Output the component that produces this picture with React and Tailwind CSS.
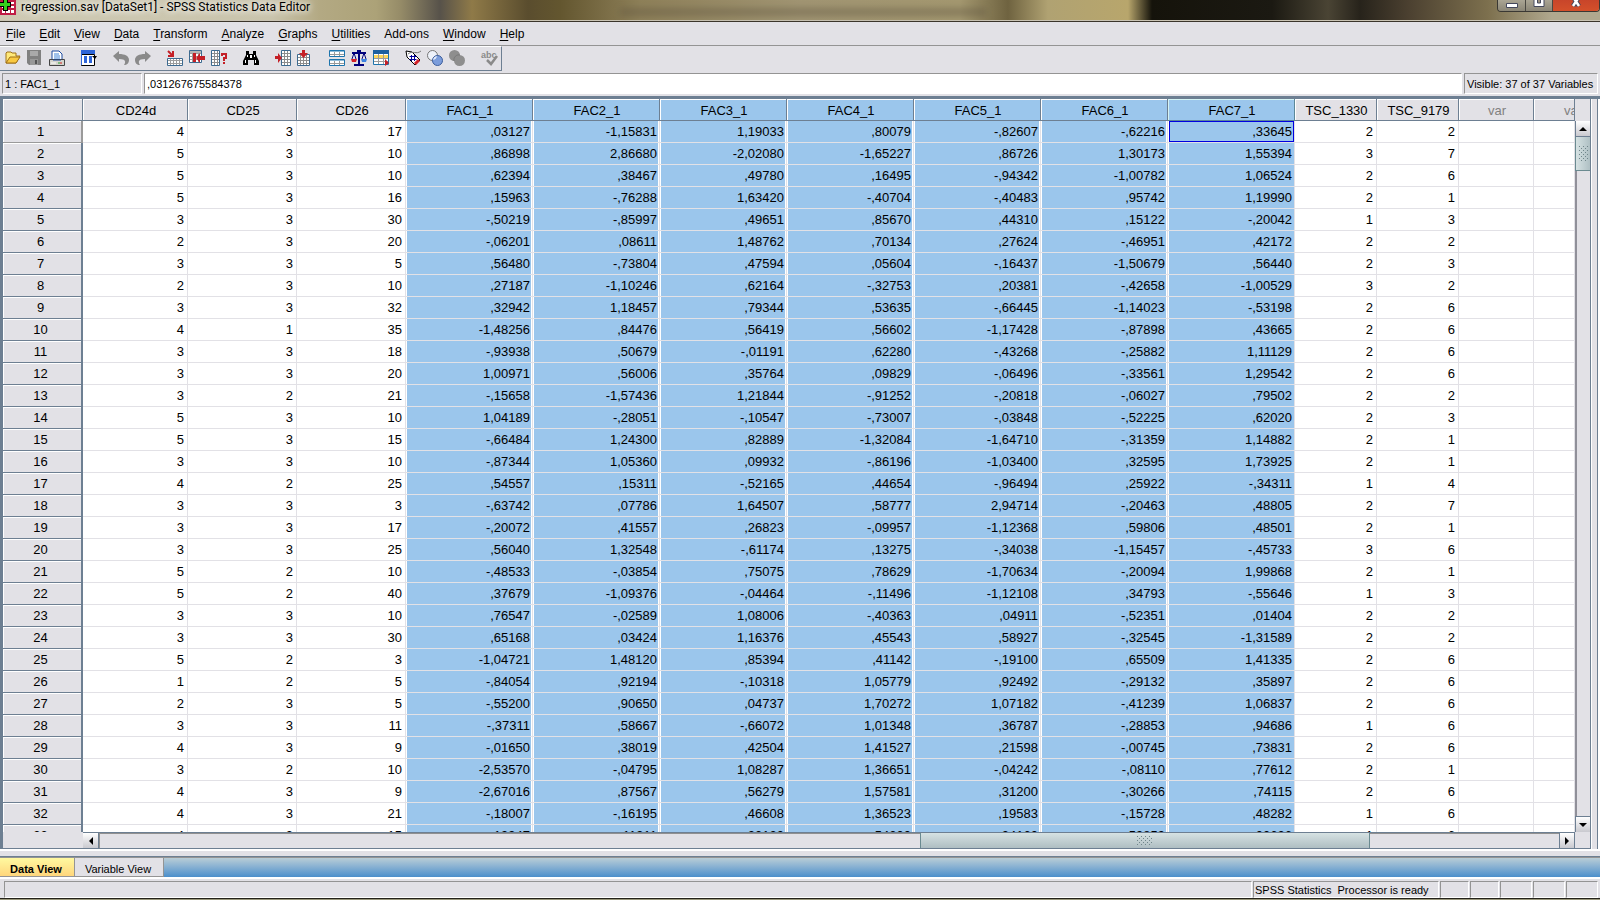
import React from "react";

const columns = [
  { name: "CD24d", kind: "plain" },
  { name: "CD25", kind: "plain" },
  { name: "CD26", kind: "plain" },
  { name: "FAC1_1", kind: "selected" },
  { name: "FAC2_1", kind: "selected" },
  { name: "FAC3_1", kind: "selected" },
  { name: "FAC4_1", kind: "selected" },
  { name: "FAC5_1", kind: "selected" },
  { name: "FAC6_1", kind: "selected" },
  { name: "FAC7_1", kind: "active" },
  { name: "TSC_1330", kind: "plain" },
  { name: "TSC_9179", kind: "plain" },
  { name: "var", kind: "empty" },
  { name: "var", kind: "empty" },
];

const rows = `4 3 17 ,03127 -1,15831 1,19033 ,80079 -,82607 -,62216 ,33645 2 2
5 3 10 ,86898 2,86680 -2,02080 -1,65227 ,86726 1,30173 1,55394 3 7
5 3 10 ,62394 ,38467 ,49780 ,16495 -,94342 -1,00782 1,06524 2 6
5 3 16 ,15963 -,76288 1,63420 -,40704 -,40483 ,95742 1,19990 2 1
3 3 30 -,50219 -,85997 ,49651 ,85670 ,44310 ,15122 -,20042 1 3
2 3 20 -,06201 ,08611 1,48762 ,70134 ,27624 -,46951 ,42172 2 2
3 3 5 ,56480 -,73804 ,47594 ,05604 -,16437 -1,50679 ,56440 2 3
2 3 10 ,27187 -1,10246 ,62164 -,32753 ,20381 -,42658 -1,00529 3 2
3 3 32 ,32942 1,18457 ,79344 ,53635 -,66445 -1,14023 -,53198 2 6
4 1 35 -1,48256 ,84476 ,56419 ,56602 -1,17428 -,87898 ,43665 2 6
3 3 18 -,93938 ,50679 -,01191 ,62280 -,43268 -,25882 1,11129 2 6
3 3 20 1,00971 ,56006 ,35764 ,09829 -,06496 -,33561 1,29542 2 6
3 2 21 -,15658 -1,57436 1,21844 -,91252 -,20818 -,06027 ,79502 2 2
5 3 10 1,04189 -,28051 -,10547 -,73007 -,03848 -,52225 ,62020 2 3
5 3 15 -,66484 1,24300 ,82889 -1,32084 -1,64710 -,31359 1,14882 2 1
3 3 10 -,87344 1,05360 ,09932 -,86196 -1,03400 ,32595 1,73925 2 1
4 2 25 ,54557 ,15311 -,52165 ,44654 -,96494 ,25922 -,34311 1 4
3 3 3 -,63742 ,07786 1,64507 ,58777 2,94714 -,20463 ,48805 2 7
3 3 17 -,20072 ,41557 ,26823 -,09957 -1,12368 ,59806 ,48501 2 1
3 3 25 ,56040 1,32548 -,61174 ,13275 -,34038 -1,15457 -,45733 3 6
5 2 10 -,48533 -,03854 ,75075 ,78629 -1,70634 -,20094 1,99868 2 1
5 2 40 ,37679 -1,09376 -,04464 -,11496 -1,12108 ,34793 -,55646 1 3
3 3 10 ,76547 -,02589 1,08006 -,40363 ,04911 -,52351 ,01404 2 2
3 3 30 ,65168 ,03424 1,16376 ,45543 ,58927 -,32545 -1,31589 2 2
5 2 3 -1,04721 1,48120 ,85394 ,41142 -,19100 ,65509 1,41335 2 6
1 2 5 -,84054 ,92194 -,10318 1,05779 ,92492 -,29132 ,35897 2 6
2 3 5 -,55200 ,90650 ,04737 1,70272 1,07182 -,41239 1,06837 2 6
3 3 11 -,37311 ,58667 -,66072 1,01348 ,36787 -,28853 ,94686 1 6
4 3 9 -,01650 ,38019 ,42504 1,41527 ,21598 -,00745 ,73831 2 6
3 2 10 -2,53570 -,04795 1,08287 1,36651 -,04242 -,08110 ,77612 2 1
4 3 9 -2,67016 ,87567 ,56279 1,57581 ,31200 -,30266 ,74115 2 6
4 3 21 -,18007 -,16195 ,46608 1,36523 ,19583 -,15728 ,48282 1 6
4 3 15 ,19947 ,11911 ,20120 ,54200 ,34160 ,59859 ,00626 1 6`
  .split("\n")
  .map((line) => line.split(" "));

const menus = [
  ["", "F", "ile"],
  ["", "E", "dit"],
  ["", "V", "iew"],
  ["", "D", "ata"],
  ["", "T", "ransform"],
  ["", "A", "nalyze"],
  ["", "G", "raphs"],
  ["", "U", "tilities"],
  ["Add-ons", "", ""],
  ["", "W", "indow"],
  ["", "H", "elp"],
];

const drawings = {
  Open: (
    <>
      <path d="M1 12V3l1-1h4l1 1h4v3h4l-4 7H1z" fill="#ffe97a" stroke="#a07018" />
      <path d="M1 13l4-6h10l-4 6z" fill="#f9c940" stroke="#a07018" />
    </>
  ),
  Save: (
    <>
      <path d="M0 0h14v15H2l-2-2z" fill="#808080" />
      <path d="M3 1h8v5H3z" fill="#a9a9a9" />
      <path d="M3 9h8v6H3z" fill="#989898" />
      <path d="M8 10h2v4H8z" fill="#555" />
    </>
  ),
  Print: (
    <>
      <path d="M3 1h7l3 3v7H3z" fill="#fff" stroke="#1c4aa0" />
      <path d="M5 4h5M5 6h6M5 8h6" stroke="#3f83d8" />
      <path d="M.5 9.500h15v6H.5z" fill="#d4d4cc" stroke="#444" />
      <path d="M4 10h8" stroke="#1c4aa0" />
      <path d="M2 13h5" stroke="#fff" />
      <path d="M9 13h2" stroke="#28a030" />
      <path d="M11 13h2" stroke="#d02020" />
    </>
  ),
  "Recall recently used dialogs": (
    <>
      <path d="M0 0h14v4H0z" fill="#2f66d8" />
      <path d="M.5 4.500h13v11H.5z" fill="#fff" stroke="#000" />
      <path d="M.5 4v11" stroke="#2f66d8" />
      <path d="M3 6h3v7H3zM8 6h3v7H8z" fill="#2f66d8" />
      <path d="M11 6h5l-2 3z" fill="#000" />
    </>
  ),
  Undo: <path d="M0 6l6-5v3c6 0 10 2 10 6 0 3-2 5-5 5 2-3 2-6-5-6v3z" fill="#8a8a8a" />,
  Redo: <path d="M16 6l-6-5v3C4 4 0 6 0 10c0 3 2 5 5 5-2-3-2-6 5-6v3z" fill="#8a8a8a" />,
  "Go to case": (
    <>
      <path d="M1 1l4 4M6 1v5H1" stroke="#c41f26" strokeWidth="2" fill="none" />
      <path d="M.5 8.500h15v7H.5z" fill="#fff" stroke="#3c6a90" />
      <path d="M1 10.500h14M1 13.500h14M3.500 9v6M6.500 9v6M9.500 9v6M12.500 9v6" stroke="#9c9c9c" />
    </>
  ),
  "Go to variable": (
    <>
      <path d="M.5 .5h12v12H.5z" fill="#fff" stroke="#3c6a90" />
      <path d="M1 3.500h11M1 6.500h11M1 9.500h11M3.500 1v11M9.500 1v11" stroke="#9c9c9c" />
      <path d="M1 1h11v2H1z" fill="#b5b5b5" />
      <path d="M4 3h3v9H4z" fill="#c41f26" />
      <path d="M7 8l4-5v3h5v4h-5v3z" fill="#c41f26" />
    </>
  ),
  Variables: (
    <>
      <path d="M.5 .5h8v15h-8z" fill="#fff" stroke="#3c6a90" />
      <path d="M1 3.500h7M1 6.500h7M1 9.500h7M1 12.500h7M3.500 1v14M6.500 1v14" stroke="#8c8c8c" />
      <path d="M11 6V4h4v4h-2v3" stroke="#c41f26" strokeWidth="2" fill="none" />
      <path d="M12 12h2v2h-2z" fill="#c41f26" />
    </>
  ),
  Find: (
    <>
      <path d="M3 1h3v3h4V1h3v4l3 6v4h-5v-5H5v5H0v-4l3-6z" fill="#000" />
      <path d="M4.500 5v2M2.500 10v3M11.500 5v2M12.500 10v3" stroke="#fff" />
      <path d="M7 5h2v3H7z" fill="#fff" />
    </>
  ),
  "Insert cases": (
    <>
      <path d="M6.500 .5h9v15h-9z" fill="#fff" stroke="#3c6a90" />
      <path d="M7 3.500h8M7 6.500h8M7 9.500h8M7 12.500h8M9.500 1v14M12.500 1v14" stroke="#8c8c8c" />
      <path d="M0 6h3V3l4 5-4 5V9H0z" fill="#c41f26" />
    </>
  ),
  "Insert variable": (
    <>
      <path d="M.5 4.500h12v11H.5z" fill="#fff" stroke="#3c6a90" />
      <path d="M1 7.500h11M1 10.500h11M1 13.500h11M3.500 5v10M6.500 5v10M9.500 5v10" stroke="#8c8c8c" />
      <path d="M5 0h3v3h3L6.500 8 2 3h3z" fill="#c41f26" />
    </>
  ),
  "Split file": (
    <>
      <path d="M.5 .5h15v6H.5zM.5 9.500h15v6H.5z" fill="#fff" stroke="#1d74ad" />
      <path d="M1 1h14M1 10h14" stroke="#1d74ad" />
      <path d="M1 4.500h14M1 13.500h14M5.500 2v4M10.500 2v4M5.500 11v4M10.500 11v4" stroke="#999" />
    </>
  ),
  "Weight cases": (
    <>
      <path d="M8 0v14M1 3h14M3 15h10M6 1h4" stroke="#00007c" strokeWidth="2" />
      <path d="M3 3L1 9M3 3l2 6M13 3l-2 6M13 3l2 6" stroke="#00007c" />
      <path d="M0 9h6l-1 3H1z" fill="#d32028" />
      <path d="M10 9h6l-1 3h-4z" fill="#3d82e0" />
    </>
  ),
  "Select cases": (
    <>
      <path d="M.5 .5h15v14H.5z" fill="#fff" stroke="#1d74ad" />
      <path d="M0 0h16v4H0z" fill="#1d5fa0" />
      <path d="M1 5h14v3H1z" fill="#ffd65a" />
      <path d="M1 8.500h14M1 11.500h14M5.500 4v10M10.500 4v10" stroke="#9c9c9c" />
      <path d="M12 9l4 4-4 3z" fill="#c41f26" />
    </>
  ),
  "Value labels": (
    <>
      <path d="M1 1l6 1 8 8-5 5-8-8z" fill="#fff" stroke="#000" />
      <path d="M10 14l4-4" stroke="#d32028" strokeWidth="3" />
      <path d="M6.500 5v6M9.500 5v6M4.500 6.500h7M4.500 9.500h7" stroke="#00009c" />
      <path d="M3 4c5-4 8 1 13-3" stroke="#777" fill="none" />
    </>
  ),
  "Use variable sets": (
    <>
      <circle cx="5.500" cy="5.500" r="5" fill="#eef2fa" stroke="#777" />
      <circle cx="10.500" cy="10.500" r="5" fill="#7c9ddb" stroke="#3b5d9c" />
      <path d="M6 10a5 5 0 0 1 4-4 5 5 0 0 1-4 4z" fill="#e4ecfa" />
    </>
  ),
  "Show all variables": (
    <>
      <circle cx="5.500" cy="5.500" r="5.500" fill="#8e8e8e" />
      <circle cx="10.500" cy="10.500" r="5.500" fill="#8e8e8e" />
      <path d="M5 11a5 5 0 0 1 6-6" stroke="#777" fill="none" />
    </>
  ),
};

const toolGroups = [
  ["Open", "Save", "Print"],
  ["Recall recently used dialogs"],
  ["Undo", "Redo"],
  ["Go to case", "Go to variable", "Variables"],
  ["Find"],
  ["Insert cases", "Insert variable"],
  ["Split file", "Weight cases", "Select cases"],
  ["Value labels", "Use variable sets", "Show all variables"],
  ["Spell check"],
];

function ToolIcon({ name }) {
  if (name === "Spell check") {
    return (
      <svg className="h-4 w-4 overflow-visible" viewBox="0 0 16 16">
        <text x="0" y="8" fontFamily="Liberation Sans, sans-serif" fontSize="9" fontWeight="bold" fill="#8a8a8a">
          abc
        </text>
        <path d="M6 10l4 4 6-8" stroke="#8a8a8a" strokeWidth="2.500" fill="none" />
      </svg>
    );
  }
  return (
    <svg className="h-4 w-4 overflow-visible" viewBox="0 0 16 16" aria-hidden="true">
      {drawings[name]}
    </svg>
  );
}

function Arrow({ d }) {
  return (
    <svg className="h-2 w-2" viewBox="0 0 8 8" aria-hidden="true">
      <path d={d} fill="#000" />
    </svg>
  );
}

function Grip({ className }) {
  return (
    <svg className={className} aria-hidden="true">
      <defs>
        <pattern id="grip" width="4" height="4" patternUnits="userSpaceOnUse">
          <path d="M0 0h1v1H0zM2 2h1v1H2z" fill="#6f858a" />
        </pattern>
      </defs>
      <rect width="100%" height="100%" fill="url(#grip)" />
    </svg>
  );
}

function TitleBar() {
  return (
    <header className="relative flex h-[22px] shrink-0 items-start justify-between overflow-hidden border-b border-[#3b352b] bg-[linear-gradient(90deg,#cfcab4_0%,#c9c4ac_17%,#b3a983_20%,#aca278_23.500%,#968c68_25%,#57524a_27.500%,#8f7a48_29.500%,#5a4d2e_33%,#63562f_35%,#8d7f58_40%,#a09472_50%,#a3976f_60%,#6f6340_63%,#b0a272_65.500%,#b8a66c_70.500%,#15130b_72%,#1b1912_79.500%,#4a4434_83%,#27231b_85%,#4b4030_88%,#7d704e_93%,#b0a88e_97%)] shadow-[inset_0_-1px_0_#c9c3b4]">
      <span className="absolute top-2 left-[620px] h-2 w-[366px] bg-[#5e5540]/40 blur-[3px]" />
      <div className="relative flex items-start gap-[5px]">
        <svg className="h-4 w-4" viewBox="0 0 16 16" aria-hidden="true">
          <path d="M0 0h16v15H0z" fill="#c01c44" />
          <path d="M2 2h3v2H2zM6 2h3v2H6zM11 2h3v2h-3zM2 6h3v2H2zM11 6h3v2h-3zM2 10h3v3H2zM6 10h4v3H6zM11 10h3v3h-3z" fill="#fff" />
          <path d="M3 0h5v2h3v5H8v4H3V7H0V2h3z" fill="#000" />
          <path d="M4 0h3v3h3v3H7v4H4V6H0V3h4z" fill="#35d01c" />
        </svg>
        <h1 className="font-[Roboto,sans-serif] text-[12px] leading-[15px] text-black [text-shadow:0_0_6px_#fff,0_0_8px_#fff]">
          regression.sav [DataSet1] - SPSS Statistics Data Editor
        </h1>
      </div>
      <div className="relative flex h-3 overflow-hidden rounded-b border border-t-0 border-[#3a3833]">
        <button aria-label="Minimize" className="flex w-7 items-start justify-center border-r border-[#4a4842] bg-linear-to-b from-[#aaa594] to-[#8b8676] pt-[3px]">
          <svg className="h-[5px] w-3" viewBox="0 0 12 5"><path d="M.5 .5h11v4H.5z" fill="#fff" stroke="#44485c" /></svg>
        </button>
        <button aria-label="Restore" className="flex w-[27px] items-start justify-center border-r border-[#4a4842] bg-linear-to-b from-[#aaa594] to-[#8b8676]">
          <svg className="h-[7px] w-3" viewBox="0 0 12 7"><path d="M1 -2h10v8.500H1z" fill="#fff" stroke="#44485c" /><path d="M4.500 -1h3v4h-3z" fill="#998f7c" stroke="#44485c" /></svg>
        </button>
        <button aria-label="Close" className="flex w-[46px] items-start justify-center bg-linear-to-b from-[#c8452a] to-[#d4502a]">
          <svg className="h-[7px] w-3" viewBox="0 0 12 7"><path d="M3 -3l6 9M9 -3L3 6" stroke="#44485c" strokeWidth="4.500" /><path d="M3 -3l6 9M9 -3L3 6" stroke="#fff" strokeWidth="2.500" /></svg>
        </button>
      </div>
    </header>
  );
}

const headStyle = {
  plain: "bg-[#e2e1e6] text-black border-[#6d7f92] shadow-[inset_1px_1px_0_#fff]",
  empty: "bg-[#e2e1e6] text-[#808080] border-[#6d7f92] shadow-[inset_1px_1px_0_#fff]",
  selected: "bg-[#9bc6ec] text-black border-[#6d7f92] shadow-[inset_1px_1px_0_#fff]",
  active: "bg-[#9bc6ec] text-black border-[#5c8799] shadow-[inset_1px_1px_0_#d5f4f4]",
};

const cellStyle = {
  plain: "bg-white pr-[3px]",
  empty: "bg-white",
  selected: "bg-[#9bc6ec] pr-0.5 shadow-[inset_1px_0_0_#fff,inset_-1px_0_0_#fff]",
  active: "bg-[#9bc6ec] pr-0.5 shadow-[inset_1px_0_0_#fff]",
};

function Sheet() {
  return (
    <table className="w-full table-fixed border-separate border-spacing-0 text-[13px] leading-[20px]">
      <colgroup>
        <col className="w-[80px]" />
        <col className="w-[105px]" />
        <col className="w-[109px]" />
        <col className="w-[109px]" />
        <col className="w-[127px]" />
        <col className="w-[127px]" />
        <col className="w-[127px]" />
        <col className="w-[127px]" />
        <col className="w-[127px]" />
        <col className="w-[127px]" />
        <col className="w-[127px]" />
        <col className="w-[82px]" />
        <col className="w-[82px]" />
        <col className="w-[75px]" />
        <col />
      </colgroup>
      <thead>
        <tr className="h-[22px]">
          <th aria-label="Case" className="border-r border-b border-[#6d7f92] bg-[#e2e1e6] p-0 shadow-[inset_1px_1px_0_#fff]" />
          {columns.map((c, i) => (
            <th
              key={i}
              className={`overflow-hidden border-r border-b pt-0.5 pr-0 pb-0 text-center leading-[19px] font-normal whitespace-nowrap ${i === 13 ? "pl-[30px]" : "pl-0.5"} ${headStyle[c.kind]}`}
            >
              {c.name}
            </th>
          ))}
        </tr>
      </thead>
      <tbody>
        {rows.map((row, r) => (
          <tr key={r} className="h-[22px]">
            <th
              className={`border-r-2 border-b bg-[#e2e1e6] p-0 pr-[3px] text-center font-normal shadow-[inset_1px_1px_0_#fff] ${r === 0 ? "border-[#9a9a9a]" : "border-[#6d7f92]"}`}
            >
              {r + 1}
            </th>
            {columns.map((c, i) => (
              <td
                key={i}
                className={`overflow-hidden border-r border-b border-[#e2e1e6] py-0 pl-0 text-right whitespace-nowrap ${cellStyle[c.kind]}`}
              >
                {r === 0 && c.kind === "active" ? (
                  <span className="ml-px -mr-0.5 block h-[21px] border border-[#0000e0] pr-px leading-[19px]">{row[i]}</span>
                ) : (
                  row[i]
                )}
              </td>
            ))}
          </tr>
        ))}
      </tbody>
    </table>
  );
}

const arrowButton = "flex shrink-0 items-center justify-center bg-linear-to-b from-white to-[#c9c9cf] border-[#6d7f92]";

function DataGrid() {
  return (
    <main className="flex min-h-0 flex-1 border-t-[3px] border-l-[3px] border-[#6d7f92] bg-[#e2e1e6]">
      <div className="flex min-w-0 flex-1 flex-col border-r border-b border-[#6d7f92]">
        <div className="flex min-h-0 flex-1">
          <div className="min-w-0 flex-1 overflow-hidden">
            <Sheet />
          </div>
          <div className="flex w-[15px] shrink-0 flex-col pt-[22px]">
            <button aria-label="Scroll up" className={`h-4 border-b border-l ${arrowButton}`}>
              <Arrow d="M0 6h8L4 2z" />
            </button>
            <div className="flex h-[34px] items-center justify-center border-b border-l border-[#6a8a90] bg-linear-to-r from-[#d6e2e3] to-[#afc0c4]">
              <Grip className="h-[15px] w-[9px]" />
            </div>
            <div className="flex-1 border-l-2 border-[#909099]" />
            <button aria-label="Scroll down" className={`h-4 border-t border-l ${arrowButton}`}>
              <Arrow d="M0 2h8L4 6z" />
            </button>
          </div>
        </div>
        <div className="flex h-4 shrink-0">
          <div className="w-[80px] shrink-0" />
          <div className="flex min-w-0 flex-1 border-t border-[#6d7f92]">
            <button aria-label="Scroll left" className={`w-4 border-r ${arrowButton}`}>
              <Arrow d="M6 0v8L2 4z" />
            </button>
            <div className="flex-[822_1_0%] border-t border-l border-[#909090]" />
            <div className="flex flex-[449_1_0%] items-center justify-center border-x border-[#6a8a90] bg-linear-to-b from-[#d6e2e3] to-[#afbec2]">
              <Grip className="h-[9px] w-[15px]" />
            </div>
            <div className="flex-[190_1_0%] border-t border-[#909090]" />
            <button aria-label="Scroll right" className={`w-4 border-x ${arrowButton}`}>
              <Arrow d="M2 0v8l4-4z" />
            </button>
          </div>
          <div className="w-[15px] shrink-0" />
        </div>
      </div>
      <div className="w-[7px] shrink-0 border-x border-l-white border-r-[#6d7f92]" />
      <div className="w-0.5 shrink-0 bg-white" />
    </main>
  );
}

const sunken = "border border-t-[#949494] border-l-[#949494] border-r-white border-b-white";

export default function App() {
  return (
    <div className="flex h-screen flex-col overflow-hidden bg-[#e2e1e6] font-['Liberation_Sans',Arial,sans-serif] text-[11px] text-black">
      <TitleBar />
      <nav className="flex h-6 shrink-0 items-center gap-0.5 border-b border-[#949494]">
        {menus.map(([before, key, after]) => (
          <button key={before + key} className="px-1.5 text-[12px] leading-4">
            {before}
            <span className="underline underline-offset-2">{key}</span>
            {after}
          </button>
        ))}
      </nav>
      <div className="flex h-[25px] shrink-0 items-start gap-2.5 self-start border-t border-r border-b border-t-white border-r-[#6d7f92] border-b-[#6d7f92] pt-[3px] pr-px pl-0.5">
        {toolGroups.map((group) => (
          <div key={group[0]} className="flex">
            {group.map((name) => (
              <button key={name} aria-label={name} className="px-[3px]">
                <ToolIcon name={name} />
              </button>
            ))}
          </div>
        ))}
      </div>
      <div className="flex h-[25px] shrink-0 gap-0.5 px-0.5 pt-0.5 pb-0.5">
        <div className={`w-[140px] px-0.5 leading-[21px] ${sunken}`}>1 : FAC1_1</div>
        <input
          aria-label="Cell value"
          defaultValue=",031267675584378"
          className={`min-w-0 flex-1 bg-white px-0.5 pt-0.5 outline-none ${sunken}`}
        />
        <div className={`w-[134px] px-0.5 leading-[21px] whitespace-nowrap ${sunken}`}>Visible: 37 of 37 Variables</div>
      </div>
      <DataGrid />
      <div className="h-2 shrink-0 border-t-2 border-b border-t-white border-b-[#6d7f92]" />
      <div className="flex h-[22px] shrink-0 border-t border-b-2 border-t-[#949494] border-b-white bg-linear-to-b from-[#b9cdd6] to-[#4b8fcb]">
        <button className="w-[75px] border-r border-b border-[#949494] bg-linear-to-b from-[#fff9a0] to-[#ffd67c] pt-[3px] pr-0.5 font-bold">
          Data View
        </button>
        <button className="w-[89px] border-r border-b border-[#949494] bg-[#e2e1e6] pt-[3px] pr-0.5">Variable View</button>
      </div>
      <footer className="flex h-[19px] shrink-0 gap-px pt-0.5 pr-0.5 pl-1 leading-4">
        <div className={`flex-1 ${sunken}`} />
        <div className={`w-[186px] px-px whitespace-pre ${sunken}`}>{"SPSS Statistics  Processor is ready"}</div>
        <div className={`w-[29px] ${sunken}`} />
        <div className={`w-[29px] ${sunken}`} />
        <div className={`w-8 ${sunken}`} />
        <div className={`w-8 ${sunken}`} />
        <div className={`w-8 ${sunken}`} />
      </footer>
      <div className="h-0.5 shrink-0 border-t border-[#24221a] bg-[#9a987c]" />
    </div>
  );
}
